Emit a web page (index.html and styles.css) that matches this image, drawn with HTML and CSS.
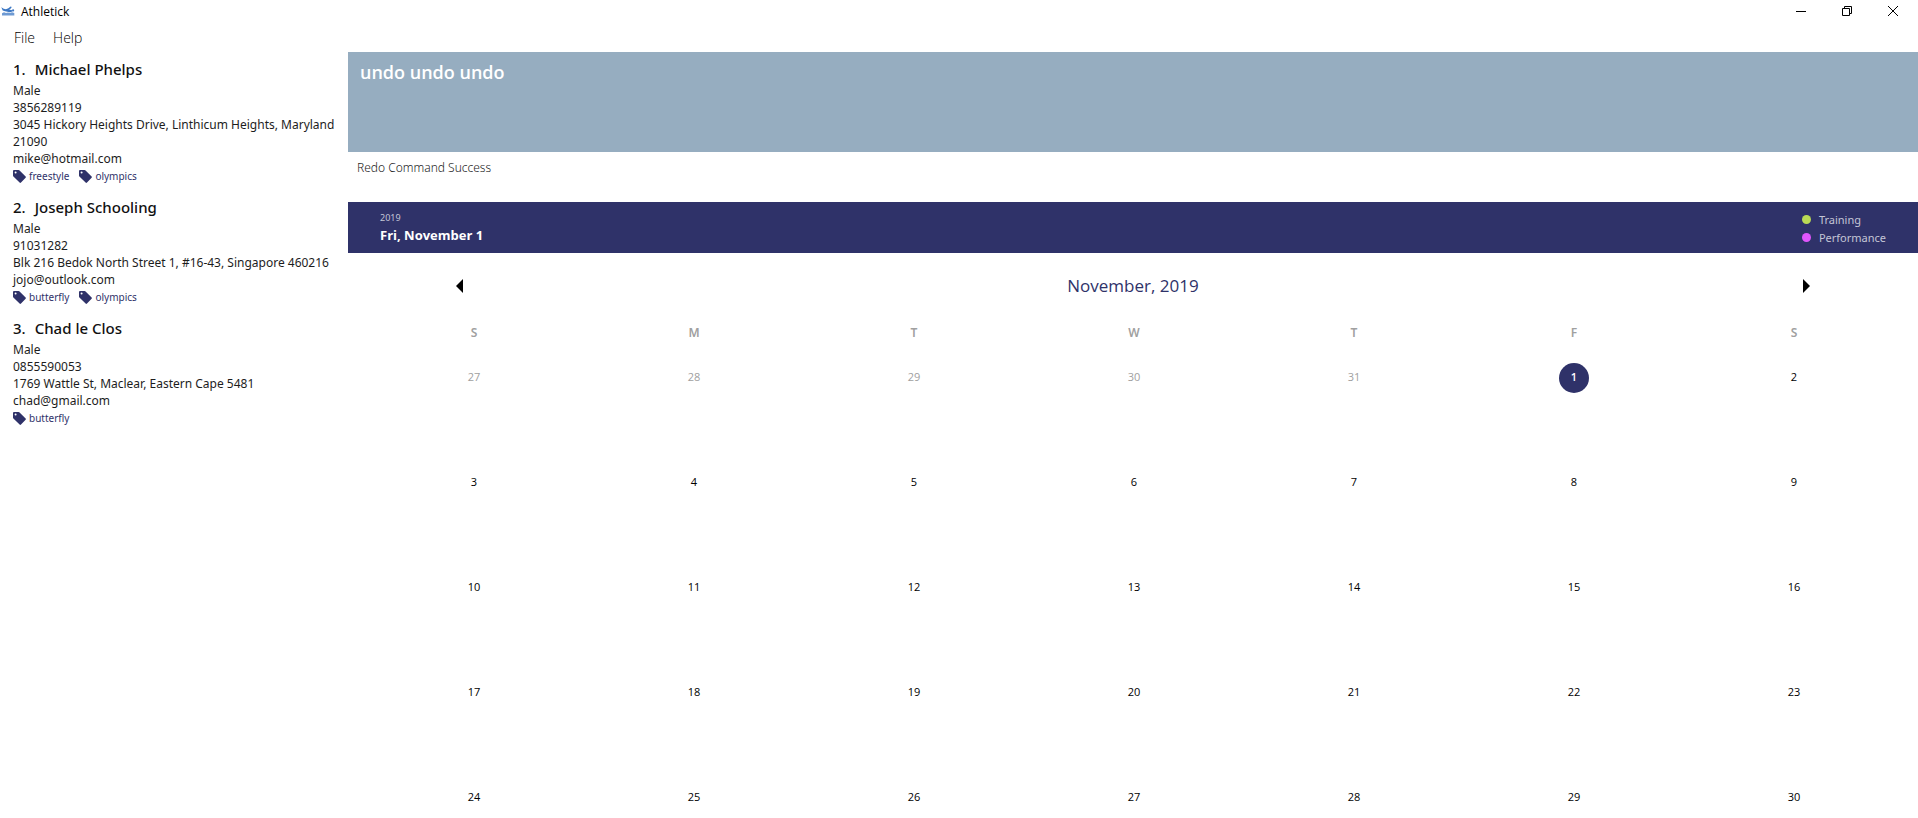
FILE: index.html
```html
<!DOCTYPE html>
<html lang="en">
<head>
<meta charset="utf-8">
<title>Athletick</title>
<link rel="stylesheet" href="styles.css">
</head>
<body>
<svg class="defs" aria-hidden="true">
  <symbol id="tag" viewBox="0 0 13 13"><path fill-rule="evenodd" d="M1 0h4.600q.6 0 1 .4L12.600 6.400q.7.7 0 1.400L8 12.600q-.7.700-1.400 0L.4 6.600Q0 6.200 0 5.600V1q0-1 1-1zM2.600 1.600a1 1 0 1 0 0 2a1 1 0 0 0 0-2z"/></symbol>
</svg>
<header class="titlebar">
  <svg class="logo" viewBox="0 0 14 10" aria-hidden="true">
    <path d="M.3 1.200l2.400 1.500 2.200.5 2.500-.9L9.600.6l1.200.5-1.300 1.700-1.400 1 2.600.3.8 1.400-2.600.8L4 5.200 1.700 4.600z"/>
    <circle cx="12.100" cy="4.400" r="1.100"/>
    <path d="M1 7.200l2-1 2 .9 2-.7 2 .7 2-.9 2.300.9v2.300H1z" opacity=".75"/>
  </svg>
  <h1 class="app-name">Athletick</h1>
  <div class="window-controls">
    <button type="button" aria-label="Minimize"><svg viewBox="0 0 10 10"><path d="M0 5.500h10"/></svg></button>
    <button type="button" aria-label="Restore"><svg viewBox="0 0 10 10"><path d="M.5 2.500h7v7h-7zM2.500 2.500v-2h7v7h-2"/></svg></button>
    <button type="button" aria-label="Close"><svg viewBox="0 0 10 10"><path d="M0 0l10 10M10 0L0 10"/></svg></button>
  </div>
</header>
<nav class="menubar">
  <button type="button">File</button>
  <button type="button">Help</button>
</nav>
<main class="workspace">
  <aside class="people">
    <article class="person">
      <h2><span>1.</span><span>Michael Phelps</span></h2>
      <p>Male</p>
      <p>3856289119</p>
      <p>3045 Hickory Heights Drive, Linthicum Heights, Maryland 21090</p>
      <p>mike@hotmail.com</p>
      <ul class="tags">
        <li><svg><use href="#tag"/></svg>freestyle</li>
        <li><svg><use href="#tag"/></svg>olympics</li>
      </ul>
    </article>
    <article class="person">
      <h2><span>2.</span><span>Joseph Schooling</span></h2>
      <p>Male</p>
      <p>91031282</p>
      <p>Blk 216 Bedok North Street 1, #16-43, Singapore 460216</p>
      <p>jojo@outlook.com</p>
      <ul class="tags">
        <li><svg><use href="#tag"/></svg>butterfly</li>
        <li><svg><use href="#tag"/></svg>olympics</li>
      </ul>
    </article>
    <article class="person">
      <h2><span>3.</span><span>Chad le Clos</span></h2>
      <p>Male</p>
      <p>0855590053</p>
      <p>1769 Wattle St, Maclear, Eastern Cape 5481</p>
      <p>chad@gmail.com</p>
      <ul class="tags">
        <li><svg><use href="#tag"/></svg>butterfly</li>
      </ul>
    </article>
  </aside>
  <section class="content">
    <textarea class="command" aria-label="Command" spellcheck="false">undo undo undo</textarea>
    <output class="result">Redo Command Success</output>
    <header class="date-banner">
      <div>
        <p class="year">2019</p>
        <p class="date">Fri, November 1</p>
      </div>
      <ul class="legend">
        <li><span class="dot training"></span>Training</li>
        <li><span class="dot performance"></span>Performance</li>
      </ul>
    </header>
    <div class="month-nav">
      <button type="button" aria-label="Previous month"><svg viewBox="0 0 7 14"><path d="M7 0v14L0 7z"/></svg></button>
      <h2>November, 2019</h2>
      <button type="button" aria-label="Next month"><svg viewBox="0 0 7 14"><path d="M0 0v14l7-7z"/></svg></button>
    </div>
    <div class="calendar-wrap">
      <table class="calendar">
        <thead>
          <tr><th>S</th><th>M</th><th>T</th><th>W</th><th>T</th><th>F</th><th>S</th></tr>
        </thead>
        <tbody>
          <tr><td class="other">27</td><td class="other">28</td><td class="other">29</td><td class="other">30</td><td class="other">31</td><td><span class="selected">1</span></td><td>2</td></tr>
          <tr><td>3</td><td>4</td><td>5</td><td>6</td><td>7</td><td>8</td><td>9</td></tr>
          <tr><td>10</td><td>11</td><td>12</td><td>13</td><td>14</td><td>15</td><td>16</td></tr>
          <tr><td>17</td><td>18</td><td>19</td><td>20</td><td>21</td><td>22</td><td>23</td></tr>
          <tr><td>24</td><td>25</td><td>26</td><td>27</td><td>28</td><td>29</td><td>30</td></tr>
        </tbody>
      </table>
    </div>
  </section>
</main>
</body>
</html>
```
FILE: styles.css
```css
* { box-sizing: border-box; margin: 0; padding: 0; }
body {
  height: 100vh;
  display: flex;
  flex-direction: column;
  overflow: hidden;
  background: #fff;
  color: #1d1d1d;
  font: 12px/17px "Noto Sans", "Open Sans", sans-serif;
}
ul { list-style: none; }
button { border: 0; background: none; font: inherit; color: inherit; }
.defs { position: absolute; width: 0; height: 0; }

.titlebar { display: flex; align-items: center; height: 22px; flex: none; }
.logo { width: 14px; height: 10px; margin: 0 6px 0 1px; fill: #3d78c4; }
.app-name { font: 400 12px/17px "Open Sans", "Noto Sans", sans-serif; color: #000; }
.window-controls { display: flex; margin-left: auto; padding-right: 2px; }
.window-controls button { width: 46px; height: 20px; display: grid; place-items: center; }
.window-controls svg { width: 10px; height: 10px; fill: none; stroke: #000; overflow: visible; }

.menubar { display: flex; align-items: center; gap: 18px; height: 30px; flex: none; padding: 2px 14px 0; }
.menubar button { font: 300 14px/20px "Open Sans", "Noto Sans", sans-serif; color: #000; }

.workspace { flex: 1; min-height: 0; display: flex; }
.people { width: 348px; flex: none; padding: 5px 8px 0 13px; }
.person { padding-bottom: 10px; }
.person h2 { display: flex; gap: 9px; margin-bottom: 1px; font-size: 15px; font-weight: 500; line-height: 24px; color: #111; }
.tags { display: flex; gap: 10px; padding-top: 1px; font-size: 10px; color: #2f3269; }
.tags li { display: flex; align-items: center; gap: 3px; }
.tags svg { width: 13px; height: 13px; fill: #2f3269; }

.content { flex: 1; min-width: 0; display: flex; flex-direction: column; }
.command {
  height: 100px;
  flex: none;
  border: 0;
  outline: 0;
  resize: none;
  padding: 7px 12px;
  background: #96adc0;
  color: #fff;
  font: 600 18px/26px "Open Sans", "Noto Sans", sans-serif;
}
.result { height: 50px; flex: none; padding: 7px 9px; font-weight: 300; line-height: 18px; }
.date-banner {
  display: flex;
  align-items: center;
  justify-content: space-between;
  height: 51px;
  flex: none;
  padding: 0 32px;
  background: #2f3269;
  color: #fff;
}
.year { font-size: 9px; line-height: 15px; color: #c4c5d6; }
.date { font: 700 13px/20px "Open Sans", "Noto Sans", sans-serif; }
.legend { padding-top: 2px; font-size: 11px; line-height: 18px; color: #c4c5d6; }
.legend li { display: flex; align-items: center; gap: 8px; }
.dot { width: 9px; height: 9px; border-radius: 50%; }
.training { background: #bada55; }
.performance { background: #e056fd; }

.month-nav { display: flex; align-items: center; justify-content: space-between; height: 65px; flex: none; padding: 0 108px; }
.month-nav h2 { font: 400 17px/24px "Open Sans", "Noto Sans", sans-serif; color: #2f3269; }
.month-nav svg { display: block; width: 7px; height: 14px; }

.calendar-wrap { flex: 1; min-height: 0; overflow: hidden; padding: 0 14px 0 16px; }
.calendar { width: 100%; table-layout: fixed; border-collapse: collapse; text-align: center; }
.calendar th { height: 45px; padding-top: 6px; vertical-align: top; line-height: 18px; font-weight: 600; color: #a0a0a0; }
.calendar td { height: 105px; vertical-align: top; font: 11px/28px "Open Sans", "Noto Sans", sans-serif; color: #000; }
.calendar .other { color: #a0a0a0; }
.selected { display: block; width: 30px; height: 30px; margin: 0 auto; border-radius: 50%; background: #2f3269; color: #fff; font-weight: 600; }
```
